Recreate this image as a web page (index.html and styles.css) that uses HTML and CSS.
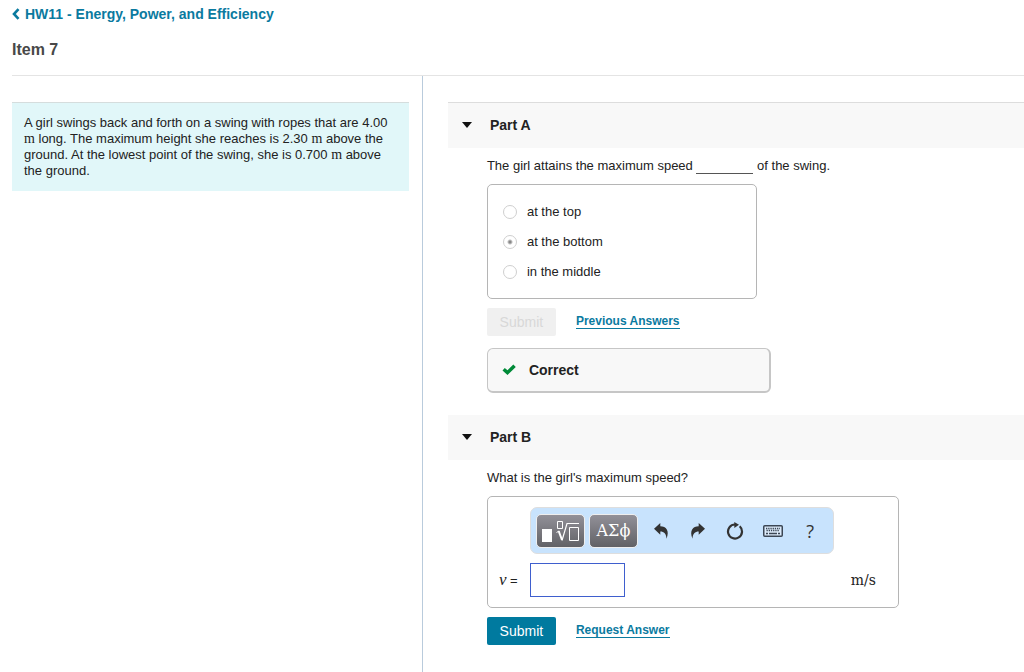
FILE: index.html
```html
<!DOCTYPE html>
<html lang="en">
<head>
<meta charset="utf-8">
<title>HW11 - Energy, Power, and Efficiency</title>
<link rel="stylesheet" href="styles.css">
</head>
<body>
<header class="page-header">
  <a class="back-link" href="#assignment">
    <svg class="back-icon" viewBox="0 0 8 12" aria-hidden="true"><path d="M6.500 1.200 2 6l4.500 4.800" fill="none" stroke="currentColor" stroke-width="2.600"/></svg>
    <span>HW11 - Energy, Power, and Efficiency</span>
  </a>
  <h1 class="item-title">Item 7</h1>
</header>
<main class="columns">
  <section class="intro-column">
    <p class="intro">A girl swings back and forth on a swing with ropes that are 4.00 <span class="unit">m</span> long. The maximum height she reaches is 2.30 <span class="unit">m</span> above the ground. At the lowest point of the swing, she is 0.700 <span class="unit">m</span> above the ground.</p>
  </section>
  <div class="parts-column">
    <section class="part">
      <h2 class="part-header part-header-first"><button class="part-toggle" type="button"><svg class="caret" viewBox="0 0 10 6" aria-hidden="true"><path d="M0 0h10L5 6z" fill="#111"/></svg><span>Part A</span></button></h2>
      <div class="part-body">
        <p class="question" id="question-a">The girl attains the maximum speed <span class="blank"></span> of the swing.</p>
        <div class="choices" role="radiogroup" aria-labelledby="question-a">
          <label class="choice"><input class="radio" type="radio" name="a" disabled><span>at the top</span></label>
          <label class="choice"><input class="radio" type="radio" name="a" checked disabled><span>at the bottom</span></label>
          <label class="choice"><input class="radio" type="radio" name="a" disabled><span>in the middle</span></label>
        </div>
        <div class="actions">
          <button class="submit" type="button" disabled>Submit</button>
          <a class="action-link" href="#previous">Previous Answers</a>
        </div>
        <div class="feedback">
          <svg class="check" viewBox="0 0 14 12" aria-hidden="true"><path d="M0.500 6.500 2.800 4l2.700 2.300L11.300 0.600l2.500 2.300L5.500 11z" fill="#008a38"/></svg>
          <strong>Correct</strong>
        </div>
      </div>
    </section>
    <section class="part">
      <h2 class="part-header"><button class="part-toggle" type="button"><svg class="caret" viewBox="0 0 10 6" aria-hidden="true"><path d="M0 0h10L5 6z" fill="#111"/></svg><span>Part B</span></button></h2>
      <div class="part-body">
        <p class="question">What is the girl's maximum speed?</p>
        <div class="answer-box">
          <div class="toolbar">
            <button class="palette" type="button" aria-label="Templates">
              <svg class="template-icon" viewBox="0 0 38 24" aria-hidden="true">
                <path d="M1 10h10v13H1z" fill="#fff"/>
                <g fill="none" stroke="#fff"><path d="M16.500 2.500h5v7h-5z"/><path d="M15.500 13.500l2.500-1.500"/><path d="M17.700 12l3.300 9" stroke-width="2"/><path d="M21 21.500l5-17h12" stroke-width="1.200"/><path d="M28.500 8.500h9v13h-9z"/></g>
              </svg>
            </button>
            <button class="palette" type="button">ΑΣϕ</button>
            <div class="tools">
              <button class="tool" type="button" aria-label="Undo"><svg class="tool-icon" viewBox="0 0 18 18" aria-hidden="true"><path d="M2 6.700 8.300 1v3.300c5.800.1 9.500 4.300 6.200 12.400C14.300 11.500 12 9.500 8.300 9.500v3.200z" fill="#333"/></svg></button>
              <button class="tool" type="button" aria-label="Redo"><svg class="tool-icon" viewBox="0 0 18 18" aria-hidden="true"><path d="M16 6.700 9.700 1v3.300c-5.800.1-9.500 4.300-6.200 12.400C3.700 11.500 6 9.500 9.700 9.500v3.200z" fill="#333"/></svg></button>
              <button class="tool" type="button" aria-label="Reset"><svg class="tool-icon" viewBox="0 0 18 18" aria-hidden="true"><path d="M13.700 4.300A7 7 0 1 1 9 2.500" fill="none" stroke="#333" stroke-width="2.200"/><path d="M8.300 0 13 2.800 8.300 6z" fill="#333"/></svg></button>
              <button class="tool" type="button" aria-label="Keyboard shortcuts"><svg class="keyboard-icon" viewBox="0 0 20 12" aria-hidden="true"><rect x=".75" y=".75" width="18.500" height="10.500" rx="1" fill="#dcebfa" stroke="#3b4654" stroke-width="1.500"/><path d="M3 3.500h14M3.500 5.500h13" stroke="#3b4654" stroke-width="1.400" stroke-dasharray="1.300 .9"/><path d="M3 8.500h2m1 0h8m1 0h2" stroke="#3b4654" stroke-width="1.400"/></svg></button>
              <button class="tool help" type="button">?</button>
            </div>
          </div>
          <div class="entry">
            <label class="variable" for="speed"><i class="symbol">v</i> =</label>
            <input class="entry-input" id="speed" type="text">
            <span class="entry-unit">m/s</span>
          </div>
        </div>
        <div class="actions">
          <button class="submit" type="button">Submit</button>
          <a class="action-link" href="#request">Request Answer</a>
        </div>
      </div>
    </section>
  </div>
</main>
</body>
</html>
```

FILE: styles.css
```css
* { box-sizing: border-box; }
body {
  margin: 0;
  min-height: 100vh;
  display: flex;
  flex-direction: column;
  background: #fff;
  color: #222;
  font: 13px/16px "Liberation Sans", Arial, sans-serif;
}
button, input { font: inherit; }
h1, h2, p { margin: 0; }
a { color: #0a7a9f; }

.page-header {
  margin-left: 12px;
  padding: 5px 0 15px;
  border-bottom: 1px solid #e4e4e4;
}
.back-link {
  display: flex;
  align-items: center;
  gap: 5px;
  font-size: 14px;
  line-height: 18px;
  font-weight: bold;
  text-decoration: none;
}
.back-icon { width: 8px; height: 12px; }
.item-title {
  margin-top: 17px;
  color: #484848;
  font-size: 16px;
  line-height: 20px;
}

.columns { display: flex; flex: 1; }
.intro-column {
  flex: 0 0 41.3%;
  padding: 26px 13px 26px 12px;
  border-right: 1px solid #b9cbdc;
}
.intro {
  padding: 12px 20px 12px 12px;
  border-top: 1px solid #d5dddd;
  background: #e1f7f9;
}
.unit { font-family: "Liberation Serif", serif; font-size: 14px; line-height: 1; }

.parts-column { flex: 1; min-width: 0; padding: 26px 0 0 25px; }
.part { margin-bottom: 22px; }
.part-header { background: #f8f8f8; font-size: 14px; line-height: 18px; }
.part-header-first { border-top: 1px solid #ddd; }
.part-toggle {
  display: flex;
  align-items: center;
  gap: 18px;
  width: 100%;
  padding: 13px 14px 14px;
  border: 0;
  background: none;
  color: #222;
  text-align: left;
}
.caret { width: 10px; height: 6px; }
.part-body { padding: 10px 8px 0 39px; }
.blank { display: inline-block; width: 57px; border-bottom: 1px solid #555; vertical-align: -4px; }

.choices {
  display: flex;
  flex-direction: column;
  gap: 14px;
  max-width: 270px;
  margin-top: 10px;
  padding: 19px 15px 18px;
  border: 1px solid #b5b5b5;
  border-radius: 5px;
}
.choice { display: flex; align-items: center; gap: 10px; }
.radio {
  appearance: none;
  width: 14px;
  height: 14px;
  margin: 0;
  border: 1px solid #cfcfcf;
  border-radius: 50%;
  background: #fff;
}
.radio:checked { background: radial-gradient(circle, #888 1px, #fff 3px); }

.actions { display: flex; align-items: center; gap: 20px; margin-top: 9px; }
.submit {
  min-width: 69px;
  height: 28px;
  padding: 0 12px;
  border: 0;
  border-radius: 2px;
  background: #007a9f;
  color: #fff;
  font-size: 14px;
}
.submit:disabled { background: #f0f0f0; color: #d8d8d8; }
.action-link {
  border-bottom: 1px solid #0a7a9f;
  font-size: 12px;
  line-height: 13px;
  font-weight: bold;
  text-decoration: none;
}
.feedback {
  display: flex;
  align-items: center;
  gap: 13px;
  max-width: 284px;
  margin-top: 12px;
  padding: 12px 14px;
  border: 1px solid #c6c6c6;
  border-right-width: 2px;
  border-bottom-width: 2px;
  border-radius: 6px;
  background: #f8f8f8;
  font-size: 14px;
  line-height: 18px;
}
.check { width: 14px; height: 12px; }

.answer-box {
  max-width: 412px;
  margin-top: 10px;
  padding: 10px 22px 10px 11px;
  border: 1px solid #b5b5b5;
  border-radius: 5px;
}
.toolbar {
  display: flex;
  align-items: center;
  gap: 4px;
  width: 304px;
  height: 47px;
  margin-left: 31px;
  padding: 0 4px 0 5px;
  border: 1px solid #dedede;
  border-radius: 7px;
  background: #c8e3fd;
}
.palette {
  display: flex;
  align-items: center;
  justify-content: center;
  width: 49px;
  height: 34px;
  padding: 0;
  border: 1px solid #eee;
  border-radius: 5px;
  background: linear-gradient(#929098, #626266);
  color: #fff;
  font: 16px/20px "DejaVu Serif", serif;
}
.template-icon { width: 38px; height: 24px; }
.tools { display: flex; flex: 1; }
.tool {
  display: flex;
  flex: 1;
  align-items: center;
  justify-content: center;
  padding: 0;
  border: 0;
  background: none;
  color: #333;
}
.tool-icon { width: 18px; height: 18px; }
.keyboard-icon { width: 20px; height: 12px; }
.help { font: 18px/20px "Open Sans", "Noto Sans", sans-serif; }
.entry { display: flex; align-items: center; margin-top: 9px; }
.variable { width: 31px; white-space: nowrap; }
.symbol { font: italic 17px/16px "Liberation Serif", serif; }
.entry-input { width: 95px; height: 34px; border: 1px solid #3f5fce; border-radius: 0; background: #fff; }
.entry-unit { margin-left: auto; font: 14px/16px "DejaVu Serif", serif; }
```
